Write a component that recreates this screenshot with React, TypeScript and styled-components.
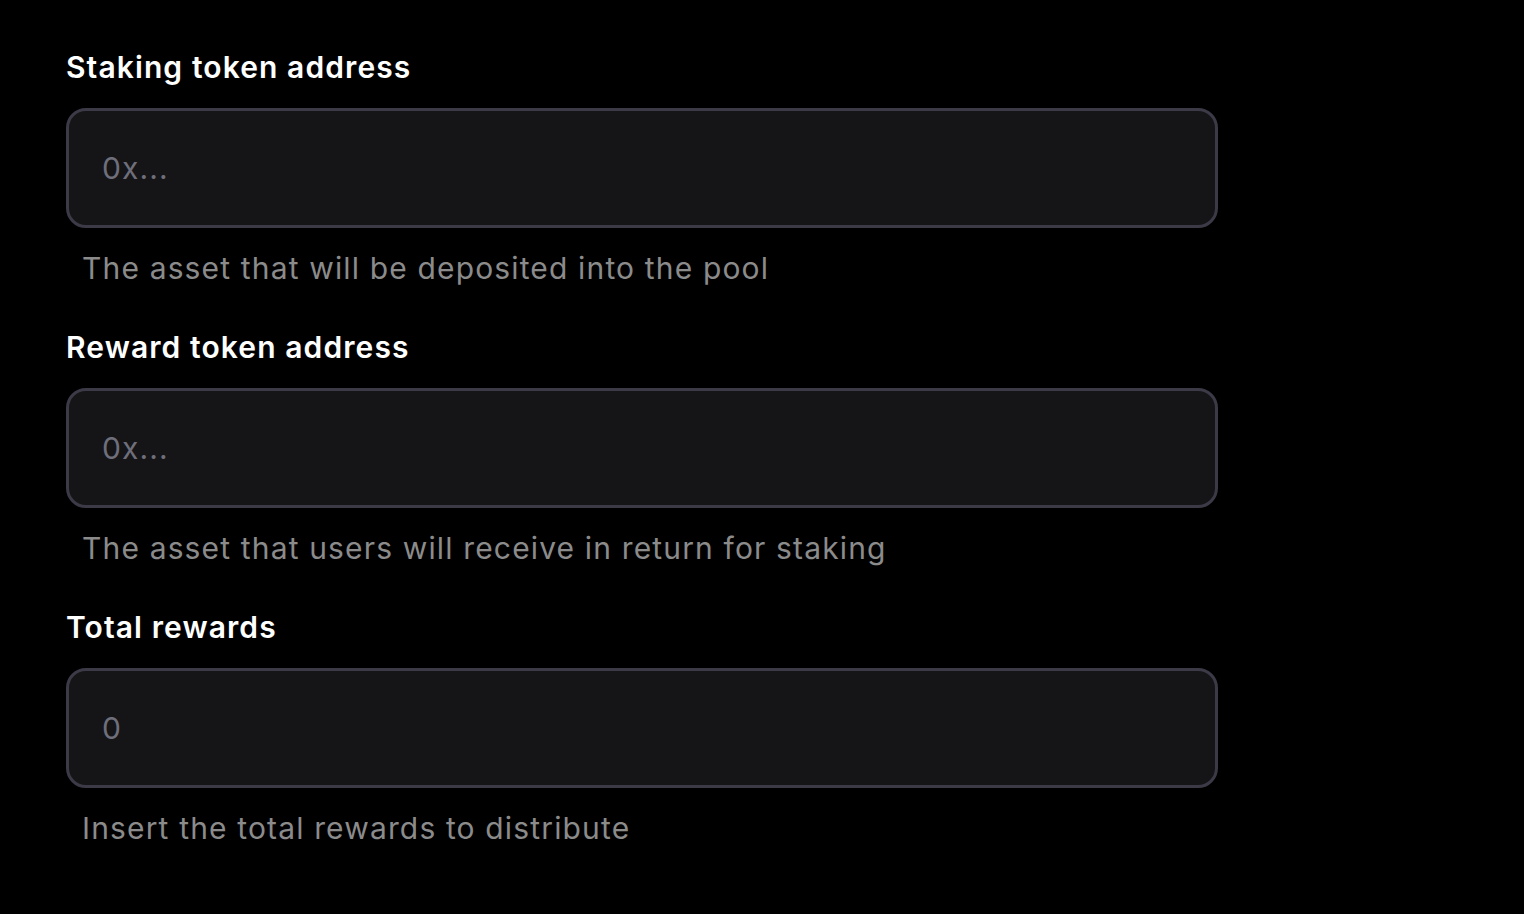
import React from "react";
import styled, { createGlobalStyle } from "styled-components";

const GlobalStyle = createGlobalStyle`
  html, body {
    margin: 0;
    padding: 0;
    background: #000;
    font-family: Inter, "Noto Sans", sans-serif;
  }
`;

const Form = styled.div`
  display: flex;
  flex-direction: column;
  gap: 39px;
  padding: 47px 0 0 66px;
  width: 1152px;
`;

const Field = styled.div`
  display: flex;
  flex-direction: column;
`;

const Label = styled.label`
  color: #fff;
  font-size: 30px;
  font-weight: 600;
  line-height: 40px;
  letter-spacing: 1.1px;
  margin-bottom: 21px;
`;

const Input = styled.input`
  box-sizing: border-box;
  width: 100%;
  height: 120px;
  padding: 0 33px;
  background: #151518;
  border: 3px solid #3b3a46;
  border-radius: 20px;
  color: #fff;
  font-family: inherit;
  font-size: 30px;
  letter-spacing: 1.1px;
  outline: none;
  &::placeholder {
    color: #6e6f7b;
  }
`;

const Helper = styled.span`
  color: #8b8b8b;
  font-size: 30px;
  line-height: 40px;
  letter-spacing: 1.15px;
  margin-top: 20px;
  padding-left: 16px;
`;

const fields = [
  { label: "Staking token address", placeholder: "0x...", help: "The asset that will be deposited into the pool" },
  { label: "Reward token address", placeholder: "0x...", help: "The asset that users will receive in return for staking" },
  { label: "Total rewards", placeholder: "0", help: "Insert the total rewards to distribute" },
];

export default function App() {
  return (
    <>
      <GlobalStyle />
      <Form>
        {fields.map((f) => (
          <Field key={f.label}>
            <Label>{f.label}</Label>
            <Input placeholder={f.placeholder} />
            <Helper>{f.help}</Helper>
          </Field>
        ))}
      </Form>
    </>
  );
}
